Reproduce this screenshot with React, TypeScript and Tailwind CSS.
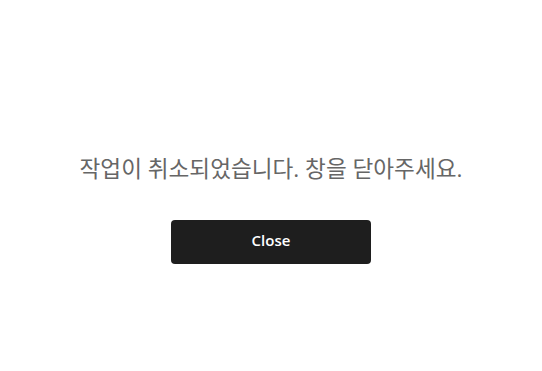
export default function App() {
  return (
    <div className="flex min-h-[371px] w-full flex-col items-center bg-white pt-[151px] font-['Open_Sans','Noto_Sans_CJK_KR',sans-serif]">
      <p className="text-[22.6px] leading-[36px] text-[#666666]">작업이 취소되었습니다. 창을 닫아주세요.</p>
      <button
        type="button"
        className="mt-[33px] flex h-[44px] w-[200px] items-center justify-center rounded-[4px] bg-[#1e1e1e] pb-[3px] text-[15px] font-semibold text-white"
      >
        Close
      </button>
    </div>
  );
}
